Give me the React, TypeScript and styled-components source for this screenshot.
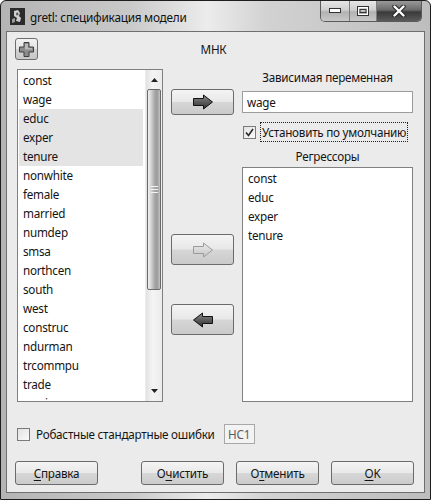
import React from "react";
import styled, { createGlobalStyle, css } from "styled-components";

const GlobalStyle = createGlobalStyle`
  html, body {
    margin: 0;
    padding: 0;
    background: #ffffff;
  }
  body {
    font-family: "Noto Sans", "Open Sans", "DejaVu Sans", sans-serif;
    font-size: 11.7px;
    letter-spacing: -0.25px;
    color: #141414;
  }
`;

const Window = styled.div`
  width: 431px;
  height: 500px;
  box-sizing: border-box;
  border: 1px solid #1e1e1e;
  border-radius: 6px 6px 0 0;
  background: linear-gradient(
    to right,
    #b4b4b4 0%,
    #c9c9c9 30%,
    #ececec 48%,
    #d2d2d2 62%,
    #bdbdbd 100%
  );
  display: flex;
  flex-direction: column;
  overflow: hidden;
`;

const TitleBar = styled.div`
  height: 30px;
  display: flex;
  align-items: flex-start;
  padding-left: 9px;
  gap: 5px;
`;

const AppIcon = styled.div`
  width: 15px;
  height: 17px;
  margin-top: 7px;
  background: #2b2b2b;
  display: flex;
  align-items: center;
  justify-content: center;
  svg {
    display: block;
  }
`;

const TitleText = styled.span`
  margin-top: 8px;
  font-size: 11.8px;
  color: #111;
  white-space: nowrap;
`;

const CaptionGroup = styled.div`
  margin-left: auto;
  margin-right: 8px;
  display: flex;
  height: 20px;
  border: 1px solid #5a5a5a;
  border-top: none;
  border-radius: 0 0 5px 5px;
  overflow: hidden;
`;

const CaptionButton = styled.div<{ $close?: boolean; $w: number }>`
  width: ${(p) => p.$w}px;
  height: 100%;
  display: flex;
  align-items: center;
  justify-content: center;
  box-sizing: border-box;
  border-left: 1px solid #7d7d7d;
  &:first-child {
    border-left: none;
  }
  background: ${(p) =>
    p.$close
      ? "linear-gradient(to bottom, #9a9a9a 0%, #6a6a6a 45%, #3a3a3a 55%, #5a5a5a 100%)"
      : "linear-gradient(to bottom, #e6e6e6 0%, #cfcfcf 45%, #b2b2b2 55%, #c8c8c8 100%)"};
`;

const Client = styled.div`
  flex: 1;
  margin: 0 5px 6px 5px;
  border: 1px solid #6f6f6f;
  background: #ebebeb;
  padding: 6px 10px 0 8px;
  display: flex;
  flex-direction: column;
`;

const HeaderRow = styled.div`
  display: grid;
  grid-template-columns: 23px 1fr 23px;
  align-items: center;
  height: 22px;
`;

const ToolButton = styled.div`
  width: 23px;
  height: 22px;
  box-sizing: border-box;
  border: 1px solid #6e6e6e;
  border-radius: 3px;
  background: linear-gradient(to bottom, #f3f3f3 0%, #e4e4e4 50%, #d2d2d2 51%, #c8c8c8 100%);
  display: flex;
  align-items: center;
  justify-content: center;
`;

const MethodLabel = styled.div`
  text-align: center;
  padding-right: 2px;
`;

const MainGrid = styled.div`
  margin-top: 9px;
  margin-left: 2px;
  height: 333px;
  display: grid;
  grid-template-columns: 146px 63px 171px;
  column-gap: 8px;
`;

const ListBox = styled.div`
  box-sizing: border-box;
  border: 1px solid #808080;
  background: #ffffff;
  display: flex;
  overflow: hidden;
  height: 100%;
`;

const ListRows = styled.div<{ $pad: number }>`
  flex: 1;
  padding: 1px 2px 0 ${(p) => p.$pad}px;
  overflow: hidden;
`;

const ListRow = styled.div<{ $selected?: boolean }>`
  height: 19px;
  line-height: 19px;
  padding-left: 4px;
  white-space: nowrap;
  background: ${(p) => (p.$selected ? "#e4e4e4" : "transparent")};
`;

const ScrollBar = styled.div`
  width: 17px;
  display: flex;
  flex-direction: column;
  background: linear-gradient(to right, #e2e2e2, #f4f4f4 40%, #ececec);
  border-left: 1px solid #ededed;
  padding: 2px 0;
  box-sizing: border-box;
`;

const ScrollArrow = styled.div`
  height: 16px;
  display: flex;
  align-items: center;
  justify-content: center;
`;

const ScrollThumb = styled.div`
  margin: 1px 1px 0 1px;
  height: 201px;
  box-sizing: border-box;
  border: 1px solid #6a6a6a;
  border-radius: 2px;
  background: linear-gradient(
    to right,
    #f2f2f2 0%,
    #d4d4d4 25%,
    #a9a9a9 55%,
    #9a9a9a 75%,
    #c4c4c4 100%
  );
  display: flex;
  align-items: center;
  justify-content: center;
`;

const ScrollTrack = styled.div`
  flex: 1;
`;

const MiddleColumn = styled.div`
  display: flex;
  flex-direction: column;
`;

const ArrowButton = styled.div<{ $top: number; $h: number }>`
  margin-top: ${(p) => p.$top}px;
  height: ${(p) => p.$h}px;
  box-sizing: border-box;
  border: 1px solid #6b6b6b;
  border-radius: 3px;
  background: linear-gradient(to bottom, #f4f4f4 0%, #e8e8e8 48%, #d6d6d6 52%, #cacaca 100%);
  display: flex;
  align-items: center;
  justify-content: center;
`;

const RightColumn = styled.div`
  display: flex;
  flex-direction: column;
  min-height: 0;
`;

const FieldLabel = styled.div<{ $top?: number }>`
  margin-top: ${(p) => p.$top ?? 0}px;
  height: 17px;
  line-height: 17px;
  text-align: center;
`;

const TextField = styled.div`
  margin-top: 5px;
  height: 22px;
  box-sizing: border-box;
  border: 1px solid #9c9c9c;
  background: #fff;
  padding-left: 4px;
  line-height: 20px;
`;

const CheckRow = styled.div`
  margin-top: 9px;
  display: flex;
  align-items: center;
  gap: 4px;
  padding-left: 1px;
`;

const CheckBox = styled.div`
  width: 13px;
  height: 13px;
  box-sizing: border-box;
  border: 1px solid #7a7a7a;
  background: linear-gradient(to bottom right, #e2e2e2, #fafafa);
  display: flex;
  align-items: center;
  justify-content: center;
  flex-shrink: 0;
`;

const FocusLabel = styled.span`
  border: 1px dotted #222;
  padding: 1px 1px;
  line-height: 16px;
  white-space: nowrap;
`;

const RegressorList = styled(ListBox)`
  margin-top: 2px;
  flex: 1;
  height: auto;
`;

const OptionRow = styled.div`
  margin-top: 22px;
  height: 20px;
  display: flex;
  align-items: center;
  padding-left: 2px;
  gap: 6px;
`;

const HCBox = styled.div`
  margin-left: 3px;
  width: 31px;
  height: 20px;
  box-sizing: border-box;
  border: 1px solid #a8a8a8;
  background: #f3f3f3;
  color: #5c5c5c;
  display: flex;
  align-items: center;
  justify-content: center;
`;

const ButtonRow = styled.div`
  margin-top: 17px;
  display: flex;
  gap: 12px;
`;

const pushLook = css`
  box-sizing: border-box;
  border: 1px solid #6b6b6b;
  border-radius: 3px;
  background: linear-gradient(to bottom, #f4f4f4 0%, #e9e9e9 48%, #d7d7d7 52%, #cbcbcb 100%);
`;

const PushButton = styled.div<{ $push?: boolean }>`
  ${pushLook};
  width: 83px;
  height: 24px;
  display: flex;
  align-items: center;
  justify-content: center;
  margin-left: ${(p) => (p.$push ? "auto" : "0")};
  u {
    text-decoration: underline;
    text-underline-offset: 2px;
  }
`;

const RightArrow = ({ disabled }: { disabled?: boolean }) => (
  <svg width="22" height="16" viewBox="0 0 22 16">
    <defs>
      <linearGradient id={disabled ? "ga" : "gd"} x1="0" y1="0" x2="0" y2="1">
        <stop offset="0" stopColor={disabled ? "#ececec" : "#8a8a8a"} />
        <stop offset="1" stopColor={disabled ? "#c4c4c4" : "#2e2e2e"} />
      </linearGradient>
    </defs>
    <path
      d="M1.5 4.5 H11.5 V1 L20.5 8 L11.5 15 V11.5 H1.5 Z"
      fill={`url(#${disabled ? "ga" : "gd"})`}
      stroke={disabled ? "#9a9a9a" : "#111"}
      strokeWidth="1"
      strokeLinejoin="round"
    />
  </svg>
);

const LeftArrow = () => (
  <svg width="22" height="16" viewBox="0 0 22 16">
    <defs>
      <linearGradient id="gl" x1="0" y1="0" x2="0" y2="1">
        <stop offset="0" stopColor="#8a8a8a" />
        <stop offset="1" stopColor="#2e2e2e" />
      </linearGradient>
    </defs>
    <path
      d="M20.5 4.5 H10.5 V1 L1.5 8 L10.5 15 V11.5 H20.5 Z"
      fill="url(#gl)"
      stroke="#111"
      strokeWidth="1"
      strokeLinejoin="round"
    />
  </svg>
);

const PlusIcon = () => (
  <svg width="17" height="17" viewBox="0 0 17 17">
    <path
      d="M6 1.5 H11 V6 H15.5 V11 H11 V15.5 H6 V11 H1.5 V6 H6 Z"
      fill="#8c8c8c"
      stroke="#3e3e3e"
      strokeWidth="1"
    />
    <path d="M7 3 H10 V7 H14 V8.5 H7 Z" fill="#b8b8b8" />
  </svg>
);

const leftItems = [
  "const",
  "wage",
  "educ",
  "exper",
  "tenure",
  "nonwhite",
  "female",
  "married",
  "numdep",
  "smsa",
  "northcen",
  "south",
  "west",
  "construc",
  "ndurman",
  "trcommpu",
  "trade",
  "services",
];

const selected = ["educ", "exper", "tenure"];
const regressors = ["const", "educ", "exper", "tenure"];

export default function App() {
  return (
    <>
      <GlobalStyle />
      <Window>
        <TitleBar>
          <AppIcon>
            <svg width="13" height="15" viewBox="0 0 13 15">
              <path d="M3 2 L7 1 L9 4 L8 7 L10 9 L9 13 L5 12 L6 9 L3 7 Z" fill="#cfcfcf" />
              <path d="M5 4 L7 3.5 L7.5 6 L5.5 6.5 Z" fill="#555" />
              <path d="M1 10 L4 9 L4 13 L1 14 Z" fill="#9a9a9a" />
            </svg>
          </AppIcon>
          <TitleText>gretl: спецификация модели</TitleText>
          <CaptionGroup>
            <CaptionButton $w={28}>
              <svg width="12" height="6" viewBox="0 0 12 6">
                <rect x="0.5" y="0.5" width="11" height="4" fill="#fff" stroke="#333" />
              </svg>
            </CaptionButton>
            <CaptionButton $w={27}>
              <svg width="12" height="10" viewBox="0 0 12 10">
                <rect x="0.5" y="0.5" width="11" height="9" fill="none" stroke="#333" />
                <rect x="1.5" y="1.5" width="9" height="7" fill="none" stroke="#fff" />
                <rect x="3" y="3.5" width="6" height="3" fill="none" stroke="#333" />
              </svg>
            </CaptionButton>
            <CaptionButton $w={45} $close>
              <svg width="14" height="12" viewBox="0 0 14 12">
                <path
                  d="M2.5 1.5 L11.5 10.5 M11.5 1.5 L2.5 10.5"
                  stroke="#2a2a2a"
                  strokeWidth="4.4"
                  strokeLinecap="round"
                />
                <path
                  d="M2.5 1.5 L11.5 10.5 M11.5 1.5 L2.5 10.5"
                  stroke="#fff"
                  strokeWidth="2.4"
                  strokeLinecap="round"
                />
              </svg>
            </CaptionButton>
          </CaptionGroup>
        </TitleBar>

        <Client>
          <HeaderRow>
            <ToolButton>
              <PlusIcon />
            </ToolButton>
            <MethodLabel>МНК</MethodLabel>
            <span />
          </HeaderRow>

          <MainGrid>
            <ListBox>
              <ListRows $pad={1}>
                {leftItems.map((v) => (
                  <ListRow key={v} $selected={selected.includes(v)}>
                    {v}
                  </ListRow>
                ))}
              </ListRows>
              <ScrollBar>
                <ScrollArrow>
                  <svg width="7" height="4" viewBox="0 0 7 4">
                    <path d="M0 4 L3.5 0 L7 4 Z" fill="#222" />
                  </svg>
                </ScrollArrow>
                <ScrollThumb>
                  <svg width="7" height="7" viewBox="0 0 7 7">
                    <path d="M0 0.5 H7 M0 3.5 H7 M0 6.5 H7" stroke="#f4f4f4" strokeWidth="1" />
                  </svg>
                </ScrollThumb>
                <ScrollTrack />
                <ScrollArrow>
                  <svg width="7" height="4" viewBox="0 0 7 4">
                    <path d="M0 0 L3.5 4 L7 0 Z" fill="#222" />
                  </svg>
                </ScrollArrow>
              </ScrollBar>
            </ListBox>

            <MiddleColumn>
              <ArrowButton $top={20} $h={26}>
                <RightArrow />
              </ArrowButton>
              <ArrowButton $top={119} $h={31}>
                <RightArrow disabled />
              </ArrowButton>
              <ArrowButton $top={39} $h={31}>
                <LeftArrow />
              </ArrowButton>
            </MiddleColumn>

            <RightColumn>
              <FieldLabel>Зависимая переменная</FieldLabel>
              <TextField>wage</TextField>
              <CheckRow>
                <CheckBox>
                  <svg width="9" height="9" viewBox="0 0 9 9">
                    <path d="M1 4.5 L3.5 7.5 L8 1" fill="none" stroke="#2a2a2a" strokeWidth="1.6" />
                  </svg>
                </CheckBox>
                <FocusLabel>Установить по умолчанию</FocusLabel>
              </CheckRow>
              <FieldLabel $top={6}>Регрессоры</FieldLabel>
              <RegressorList>
                <ListRows $pad={1}>
                  {regressors.map((v) => (
                    <ListRow key={v}>{v}</ListRow>
                  ))}
                </ListRows>
              </RegressorList>
            </RightColumn>
          </MainGrid>

          <OptionRow>
            <CheckBox />
            <span>Робастные стандартные ошибки</span>
            <HCBox>HC1</HCBox>
          </OptionRow>

          <ButtonRow>
            <PushButton>
              <span>
                <u>С</u>правка
              </span>
            </PushButton>
            <PushButton $push>
              <span>
                О<u>ч</u>истить
              </span>
            </PushButton>
            <PushButton>
              <span>
                О<u>т</u>менить
              </span>
            </PushButton>
            <PushButton>
              <span>
                <u>O</u>K
              </span>
            </PushButton>
          </ButtonRow>
        </Client>
      </Window>
    </>
  );
}
